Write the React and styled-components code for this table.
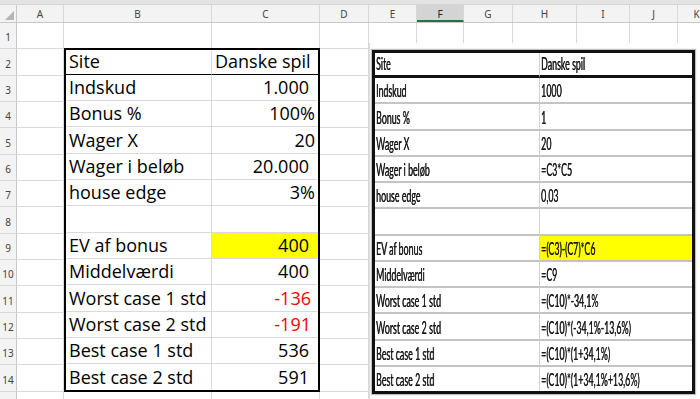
import styled, { createGlobalStyle } from "styled-components";

const GlobalStyle = createGlobalStyle`
  html, body {
    margin: 0;
    padding: 0;
    background: #ffffff;
  }
  body {
    width: 700px;
    height: 399px;
    overflow: hidden;
    font-family: "Open Sans", "Liberation Sans", sans-serif;
  }
`;

const ROW_H = 26.35;
const GRID = "#dadada";

const HEAD_COLS = [
  { name: "", width: 17 },
  { name: "A", width: 47 },
  { name: "B", width: 148 },
  { name: "C", width: 108 },
  { name: "D", width: 49 },
  { name: "E", width: 48 },
  { name: "F", width: 47, active: true },
  { name: "G", width: 49 },
  { name: "H", width: 64 },
  { name: "I", width: 53 },
  { name: "J", width: 48 },
  { name: "K", width: 38 },
];

const RIGHT_COLS = [48, 47, 49, 64, 53, 48, 38];

const values = [
  { label: "Site", value: "Danske spil", left: true, head: true },
  { label: "Indskud", value: "1.000", pad: 9 },
  { label: "Bonus %", value: "100%" },
  { label: "Wager X", value: "20" },
  { label: "Wager i beløb", value: "20.000", pad: 9 },
  { label: "house edge", value: "3%" },
  { label: "", value: "" },
  { label: "EV af bonus", value: "400", pad: 9, mark: true },
  { label: "Middelværdi", value: "400", pad: 9 },
  { label: "Worst case 1 std", value: "-136", pad: 7, red: true },
  { label: "Worst case 2 std", value: "-191", pad: 7, red: true },
  { label: "Best case 1 std", value: "536", pad: 9 },
  { label: "Best case 2 std", value: "591", pad: 9 },
];

const formulas = [
  { label: "Site", value: "Danske spil", head: true },
  { label: "Indskud", value: "1000" },
  { label: "Bonus %", value: "1" },
  { label: "Wager X", value: "20" },
  { label: "Wager i beløb", value: "=C3*C5" },
  { label: "house edge", value: "0,03" },
  { label: "", value: "" },
  { label: "EV af bonus", value: "=(C3)-(C7)*C6", mark: true },
  { label: "Middelværdi", value: "=C9" },
  { label: "Worst case 1 std", value: "=(C10)*-34,1%" },
  { label: "Worst case 2 std", value: "=(C10)*(-34,1%-13,6%)" },
  { label: "Best case 1 std", value: "=(C10)*(1+34,1%)" },
  { label: "Best case 2 std", value: "=(C10)*(1+34,1%+13,6%)" },
];

const Sheet = styled.div`
  display: flex;
  flex-direction: column;
  width: 700px;
  height: 399px;
  overflow: hidden;
`;

const Ribbon = styled.div`
  height: 5px;
  background: #e3e3e3;
  border-bottom: 1px solid #d6d6d6;
  box-sizing: border-box;
`;

const HeaderRow = styled.div`
  display: flex;
  height: 18px;
  background: #f3f3f3;
  border-bottom: 1px solid #c8c8c8;
  box-sizing: border-box;
  flex-shrink: 0;
  overflow: hidden;
`;

const ColHead = styled.div`
  flex: 0 0 ${({ $w }) => $w}px;
  display: flex;
  align-items: center;
  justify-content: center;
  box-sizing: border-box;
  border-right: 1px solid #d8d8d8;
  font-family: "Noto Sans", "Open Sans", sans-serif;
  font-size: 10px;
  color: ${({ $active }) => ($active ? "#262626" : "#444444")};
  background: ${({ $active }) => ($active ? "#d4d4d4" : "transparent")};
  border-bottom: ${({ $active }) => ($active ? "2px solid #217346" : "none")};
  padding-top: ${({ $active }) => ($active ? "2px" : "0")};
`;

const Corner = styled.div`
  flex: 0 0 17px;
  display: flex;
  align-items: flex-end;
  justify-content: flex-end;
  padding: 0 2px 2px 0;
  box-sizing: border-box;
  border-right: 1px solid #c8c8c8;
`;

const Body = styled.div`
  display: flex;
  flex: 1;
  min-height: 0;
`;

const LeftGrid = styled.div`
  display: grid;
  grid-template-columns: 17px 47px 148px 108px 49px;
  grid-template-rows: repeat(15, ${ROW_H}px);
  flex: 0 0 369px;
`;

const RowHead = styled.div`
  grid-column: 1;
  grid-row: ${({ $row }) => $row};
  display: flex;
  align-items: flex-end;
  justify-content: center;
  padding-bottom: 4px;
  box-sizing: border-box;
  background: #f3f3f3;
  border-right: 1px solid #c8c8c8;
  border-bottom: 1px solid #d8d8d8;
  font-family: "Noto Sans", "Open Sans", sans-serif;
  font-size: 10px;
  color: #444444;
`;

const Blank = styled.div`
  grid-column: ${({ $col }) => $col};
  grid-row: ${({ $row }) => $row};
  border-right: 1px solid ${GRID};
  border-bottom: 1px solid ${GRID};
`;

const Table = styled.div`
  grid-column: 3 / 5;
  grid-row: 2 / 15;
  display: grid;
  grid-template-columns: 146px 1fr;
  grid-template-rows: ${ROW_H - 2}px repeat(11, ${ROW_H}px) 1fr;
  border: 2px solid #000000;
  margin-top: -1px;
  box-sizing: border-box;
  background: #ffffff;
`;

const Cell = styled.div`
  display: flex;
  align-items: flex-end;
  justify-content: ${({ $left }) => ($left ? "flex-start" : "flex-end")};
  padding: 0 ${({ $pad }) => $pad}px 2px 3px;
  box-sizing: border-box;
  font-size: 18px;
  line-height: 22px;
  white-space: nowrap;
  color: ${({ $red }) => ($red ? "#ff0000" : "#000000")};
  background: ${({ $mark }) => ($mark ? "#ffff00" : "transparent")};
  border-right: ${({ $divider }) => ($divider ? `1px solid ${GRID}` : "none")};
  border-bottom: ${({ $head, $last }) =>
    $last ? "none" : $head ? "1.5px solid #000000" : `1px solid ${GRID}`};
`;

const RightPanel = styled.div`
  display: flex;
  flex-direction: column;
  flex: 0 0 331px;
  min-width: 0;
  overflow: hidden;
`;

const Stub = styled.div`
  display: flex;
  height: 20px;
  flex-shrink: 0;
`;

const StubCol = styled.div`
  flex: 0 0 ${({ $w }) => $w}px;
  box-sizing: border-box;
  border-right: 1px solid ${GRID};
`;

const Picture = styled.div`
  flex: 1;
  padding: 7px 5px 0 2px;
  background: #ffffff;
  border-left: 1px solid ${GRID};
  box-sizing: border-box;
`;

const Clip = styled.div`
  display: grid;
  grid-template-columns: 165px 1fr;
  grid-template-rows: 25px repeat(11, 26.25px) 1fr;
  height: 344px;
  box-sizing: border-box;
  border: 3px solid #111111;
  box-shadow: 0 0 1px 1px rgba(0, 0, 0, 0.25);
  filter: blur(0.35px);
  overflow: hidden;
`;

const ClipCell = styled.div`
  display: flex;
  align-items: flex-end;
  padding: 0 0 2px 1px;
  box-sizing: border-box;
  overflow: visible;
  white-space: nowrap;
  background: ${({ $mark }) => ($mark ? "#ffff00" : "transparent")};
  border-right: ${({ $divider }) => ($divider ? "1.5px solid #d2d2d2" : "none")};
  border-bottom: ${({ $head, $last }) =>
    $last ? "none" : $head ? "3px solid #111111" : "2px solid #c4c4c4"};
`;

// condensed formula text; the shadow thickens the squeezed vertical strokes
const Squeezed = styled.span`
  display: inline-block;
  font-family: "Lato", "Liberation Sans", sans-serif;
  font-size: 17px;
  line-height: 18px;
  color: #1a1a1a;
  text-shadow: 0.6px 0 0 #1a1a1a;
  transform: scaleX(0.52);
  transform-origin: left bottom;
`;

function CornerMark() {
  return (
    <svg width="9" height="9" viewBox="0 0 9 9">
      <polygon points="9,0 9,9 0,9" fill="#b5b5b5" />
    </svg>
  );
}

function ValuesTable() {
  return (
    <Table>
      {values.map((r, i) => {
        const last = i === values.length - 1;
        return [
          <Cell key={`l${i}`} $left $pad={0} $divider $head={r.head} $last={last}>
            {r.label}
          </Cell>,
          <Cell
            key={`v${i}`}
            $left={r.left}
            $pad={r.left ? 0 : r.pad || 3}
            $head={r.head}
            $last={last}
            $red={r.red}
            $mark={r.mark}
          >
            {r.value}
          </Cell>,
        ];
      })}
    </Table>
  );
}

function FormulaTable() {
  return (
    <Clip>
      {formulas.map((r, i) => {
        const last = i === formulas.length - 1;
        return [
          <ClipCell key={`l${i}`} $divider $head={r.head} $last={last}>
            <Squeezed>{r.label}</Squeezed>
          </ClipCell>,
          <ClipCell key={`v${i}`} $head={r.head} $last={last} $mark={r.mark}>
            <Squeezed>{r.value}</Squeezed>
          </ClipCell>,
        ];
      })}
    </Clip>
  );
}

export default function App() {
  const rows = Array.from({ length: 15 }, (_, i) => i + 1);
  const blanks = [];
  rows.forEach((row) => {
    [2, 3, 4, 5].forEach((col) => {
      const covered = (col === 3 || col === 4) && row >= 2 && row <= 14;
      if (!covered) blanks.push(<Blank key={`${row}-${col}`} $row={row} $col={col} />);
    });
  });

  return (
    <>
      <GlobalStyle />
      <Sheet>
        <Ribbon />
        <HeaderRow>
          {HEAD_COLS.map((c) =>
            c.name === "" ? (
              <Corner key="corner">
                <CornerMark />
              </Corner>
            ) : (
              <ColHead key={c.name} $w={c.width} $active={c.active}>
                {c.name}
              </ColHead>
            )
          )}
        </HeaderRow>
        <Body>
          <LeftGrid>
            {rows.map((r) => (
              <RowHead key={r} $row={r}>
                {r}
              </RowHead>
            ))}
            {blanks}
            <ValuesTable />
          </LeftGrid>
          <RightPanel>
            <Stub>
              {RIGHT_COLS.map((w, i) => (
                <StubCol key={i} $w={w} />
              ))}
            </Stub>
            <Picture>
              <FormulaTable />
            </Picture>
          </RightPanel>
        </Body>
      </Sheet>
    </>
  );
}
